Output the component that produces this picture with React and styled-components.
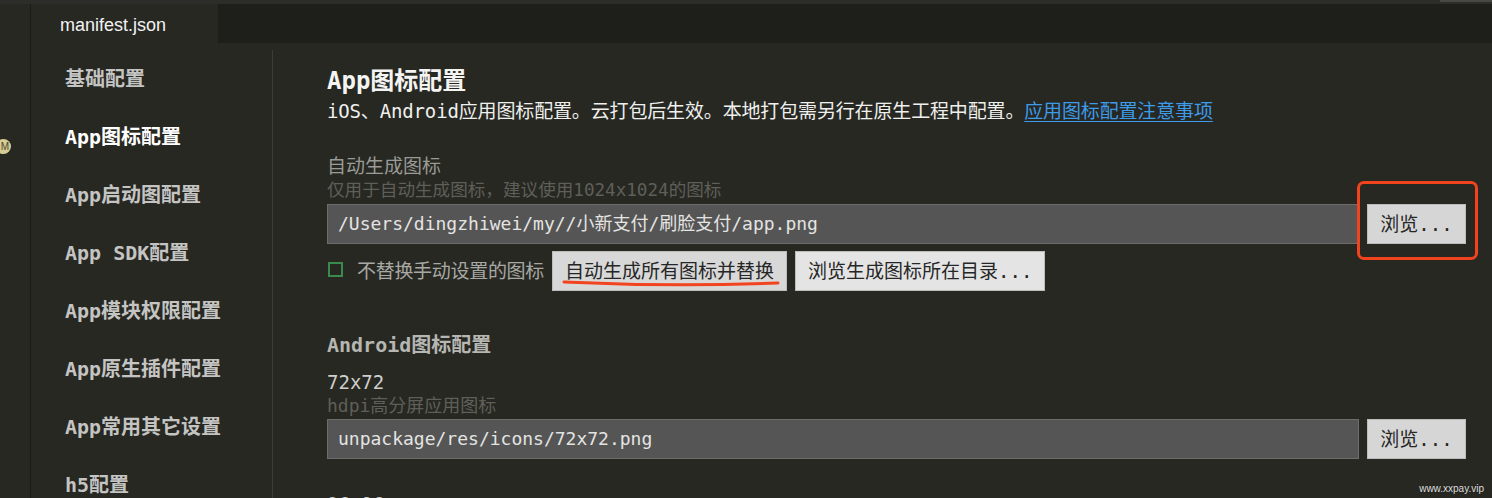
import React from "react";
import styled, { createGlobalStyle } from "styled-components";

const Global = createGlobalStyle`
  html, body { margin: 0; padding: 0; background: #272822; }
  body { overflow: hidden; }
  * { box-sizing: border-box; }
`;

const MONO = `"DejaVu Sans Mono", "Noto Sans CJK SC", monospace`;

const Page = styled.div`
  position: relative;
  width: 1492px;
  height: 498px;
  overflow: hidden;
  background: #272822;
  display: flex;
  flex-direction: column;
`;

const TopStrip = styled.div`
  height: 4px;
  flex: none;
  background: #2c2d28;
  display: flex;
  justify-content: flex-end;
`;

const ScrollHint = styled.div`
  width: 52px;
  height: 2px;
  background: #474743;
`;

const Body = styled.div`
  flex: 1;
  display: flex;
  min-height: 0;
`;

const Gutter = styled.div`
  position: relative;
  width: 31px;
  flex: none;
  background: #272822;
  border-right: 1px solid #1b1c18;
`;

const Badge = styled.div`
  position: absolute;
  left: -4px;
  top: 135px;
  width: 15px;
  height: 15px;
  border-radius: 50%;
  background: #d6cc93;
  color: #4a4632;
  font: 400 10px "Liberation Sans", sans-serif;
  display: flex;
  align-items: center;
  justify-content: center;
  padding-left: 3px;
`;

const Main = styled.div`
  flex: 1;
  display: flex;
  flex-direction: column;
  min-width: 0;
`;

const TabBar = styled.div`
  height: 39px;
  flex: none;
  background: #1e1f1b;
  display: flex;
`;

const Tab = styled.div`
  width: 187px;
  background: #272822;
  color: #f2f2f2;
  font: 400 18px "Liberation Sans", Arial, sans-serif;
  display: flex;
  align-items: center;
  padding-left: 29px;
  padding-top: 3px;
`;

const Content = styled.div`
  flex: 1;
  display: flex;
  padding-top: 7px;
  min-height: 0;
`;

const Menu = styled.nav`
  width: 242px;
  flex: none;
  border-right: 1px solid #3b3c36;
  display: flex;
  flex-direction: column;
`;

const MenuItem = styled.div`
  height: 58px;
  padding-left: 34px;
  font: 700 20px/58px ${MONO};
  color: ${(p) => (p.$active ? "#ffffff" : "#c4c4c2")};
  white-space: pre;
`;

const Panel = styled.div`
  flex: 1;
  padding: 16px 26px 0 54px;
  display: flex;
  flex-direction: column;
  font-family: ${MONO};
`;

const Title = styled.h1`
  margin: 0;
  font: 700 24px/30px ${MONO};
  color: #f4f4f2;
`;

const Desc = styled.p`
  margin: 2px 0 0;
  font: 400 19px/26px ${MONO};
  letter-spacing: -0.15px;
  color: #f0f0ee;
  white-space: nowrap;
`;

const Link = styled.a`
  color: #3d9be9;
  text-decoration: underline;
  text-underline-offset: 3px;
`;

const SectionTitle = styled.h2`
  margin: ${(p) => p.$mt}px 0 0;
  font: 700 20px/26px ${MONO};
  color: #b6b6b3;
`;

const Label = styled.div`
  margin-top: ${(p) => p.$mt || 0}px;
  font: 400 19px/24px ${MONO};
  color: ${(p) => (p.$bright ? "#cfcfcc" : "#9a9a96")};
  white-space: nowrap;
`;

const Hint = styled.div`
  font: 400 ${(p) => p.$size || 18}px/24px ${MONO};
  color: #5f5f5a;
  white-space: nowrap;
`;

const FieldRow = styled.div`
  margin-top: ${(p) => p.$mt || 0}px;
  display: flex;
  gap: 8px;
  height: 40px;
`;

const Input = styled.div`
  flex: 1;
  background: #555555;
  border: 1px solid #6c6c6a;
  color: #e4e4e2;
  font: 400 18px/38px ${MONO};
  padding-left: 10px;
  white-space: nowrap;
  overflow: hidden;
`;

const Button = styled.div`
  position: relative;
  flex: none;
  height: 40px;
  width: ${(p) => (p.$w ? `${p.$w}px` : "auto")};
  padding: 0 12px;
  background: ${(p) => p.$bg || "#e2e2e2"};
  border: 1px solid #bdbdbd;
  color: #262626;
  font: 400 19px/38px ${MONO};
  display: flex;
  align-items: center;
  justify-content: center;
  white-space: nowrap;
`;

const Highlight = styled.div`
  position: absolute;
  left: -11px;
  top: -24px;
  width: 121px;
  height: 79px;
  border: 3px solid #f2431f;
  border-radius: 7px;
  pointer-events: none;
`;

const Underline = styled.svg`
  position: absolute;
  left: 9px;
  top: 28px;
  width: 218px;
  height: 8px;
  overflow: visible;
`;

const ActionRow = styled.div`
  margin-top: 7px;
  display: flex;
  align-items: center;
  gap: 8px;
  height: 40px;
`;

const Check = styled.div`
  width: 15px;
  height: 15px;
  margin-left: 1px;
  border: 2px solid #3a8a4e;
  flex: none;
  margin-right: 6px;
  margin-top: -3px;
`;

const CheckLabel = styled.span`
  font: 400 19px/24px ${MONO};
  letter-spacing: -0.3px;
  color: #a8a8a5;
  white-space: nowrap;
`;

const Watermark = styled.div`
  position: absolute;
  right: 8px;
  bottom: 4px;
  font: 400 10px "Liberation Sans", Arial, sans-serif;
  color: #e2e2e2;
  text-shadow: 0 0 1px #000;
`;

const menu = [
  "基础配置",
  "App图标配置",
  "App启动图配置",
  "App SDK配置",
  "App模块权限配置",
  "App原生插件配置",
  "App常用其它设置",
  "h5配置",
];

export default function App() {
  return (
    <>
      <Global />
      <Page>
        <TopStrip>
          <ScrollHint />
        </TopStrip>
        <Body>
          <Gutter>
            <Badge>M</Badge>
          </Gutter>
          <Main>
            <TabBar>
              <Tab>manifest.json</Tab>
            </TabBar>
            <Content>
              <Menu>
                {menu.map((m) => (
                  <MenuItem key={m} $active={m === "App图标配置"}>
                    {m}
                  </MenuItem>
                ))}
              </Menu>
              <Panel>
                <Title>App图标配置</Title>
                <Desc>
                  iOS、Android应用图标配置。云打包后生效。本地打包需另行在原生工程中配置。
                  <Link>应用图标配置注意事项</Link>
                </Desc>
                <Label $mt={30}>自动生成图标</Label>
                <Hint $size={17.6}>仅用于自动生成图标，建议使用1024x1024的图标</Hint>
                <FieldRow $mt={2}>
                  <Input>/Users/dingzhiwei/my//小新支付/刷脸支付/app.png</Input>
                  <Button $w={99} $bg="#d6d6d6">
                    浏览...
                    <Highlight />
                  </Button>
                </FieldRow>
                <ActionRow>
                  <Check />
                  <CheckLabel>不替换手动设置的图标</CheckLabel>
                  <Button $bg="#d8d8d8">
                    自动生成所有图标并替换
                    <Underline viewBox="0 0 218 8">
                      <path
                        d="M2 2 Q 110 7 216 3"
                        fill="none"
                        stroke="#f2431f"
                        strokeWidth="3"
                        strokeLinecap="round"
                      />
                    </Underline>
                  </Button>
                  <Button $bg="#e4e4e4">浏览生成图标所在目录...</Button>
                </ActionRow>
                <SectionTitle $mt={41}>Android图标配置</SectionTitle>
                <Label $mt={12} $bright>
                  72x72
                </Label>
                <Hint>hdpi高分屏应用图标</Hint>
                <FieldRow $mt={1}>
                  <Input>unpackage/res/icons/72x72.png</Input>
                  <Button $w={99} $bg="#d6d6d6">
                    浏览...
                  </Button>
                </FieldRow>
                <Label $mt={33} $bright>
                  96x96
                </Label>
              </Panel>
            </Content>
          </Main>
        </Body>
        <Watermark>www.xxpay.vip</Watermark>
      </Page>
    </>
  );
}
